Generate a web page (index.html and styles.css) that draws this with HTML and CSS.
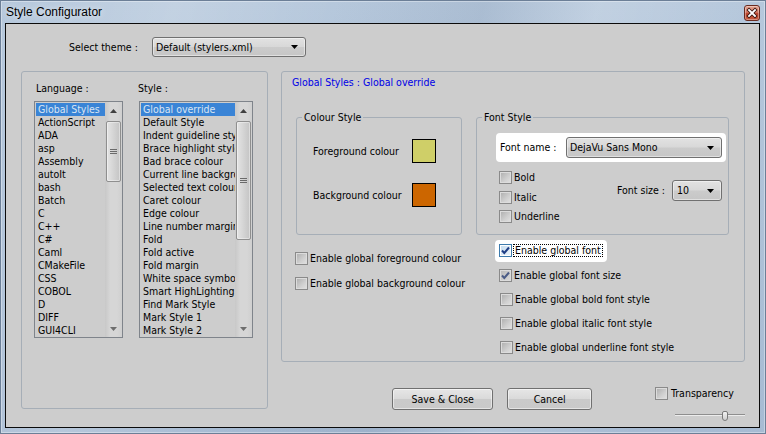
FILE: index.html
```html
<!DOCTYPE html>
<html>
<head>
<meta charset="utf-8">
<title>Style Configurator</title>
<link rel="stylesheet" href="styles.css">
</head>
<body>
<div class="window">
  <div class="titlebar">
    <span class="title">Style Configurator</span>
    <span class="close">
      <svg width="14" height="14" viewBox="0 0 14 14"><path d="M4 4L10 10M10 4L4 10" stroke="#3b1710" stroke-width="3.6" stroke-linecap="square"/><path d="M4 4L10 10M10 4L4 10" stroke="#ffffff" stroke-width="1.8" stroke-linecap="square"/></svg>
    </span>
  </div>
  <div class="client">
    <div class="theme-row">
      <span class="theme-label">Select theme :</span>
      <div class="combo theme-combo"><span class="combo-text">Default (stylers.xml)</span><svg class="arrow" width="7" height="4" viewBox="0 0 7 4"><path d="M0 0H7L3.5 4Z" fill="#000"/></svg></div>
    </div>
    <div class="main">
      <div class="group left-group">
        <div class="col lang-col">
          <div class="col-label lang-label">Language :</div>
          <div class="listbox">
            <ul class="items">
              <li class="sel">Global Styles</li>
              <li>ActionScript</li>
              <li>ADA</li>
              <li>asp</li>
              <li>Assembly</li>
              <li>autoIt</li>
              <li>bash</li>
              <li>Batch</li>
              <li>C</li>
              <li>C++</li>
              <li>C#</li>
              <li>Caml</li>
              <li>CMakeFile</li>
              <li>CSS</li>
              <li>COBOL</li>
              <li>D</li>
              <li>DIFF</li>
              <li>GUI4CLI</li>
            </ul>
            <div class="vscroll">
              <div class="sb-btn"><svg width="7" height="4" viewBox="0 0 7 4"><path d="M3.5 0L7 4H0Z" fill="#404040"/></svg></div>
              <div class="sb-thumb lang-thumb"><svg width="7" height="5" viewBox="0 0 7 5"><path d="M0 0.5H7M0 2.5H7M0 4.5H7" stroke="#6a6a6a" stroke-width="1"/></svg></div>
              <div class="sb-track"></div>
              <div class="sb-btn"><svg width="7" height="4" viewBox="0 0 7 4"><path d="M0 0H7L3.5 4Z" fill="#6e6e6e"/></svg></div>
            </div>
          </div>
        </div>
        <div class="col style-col">
          <div class="col-label style-label">Style :</div>
          <div class="listbox">
            <ul class="items">
              <li class="sel">Global override</li>
              <li>Default Style</li>
              <li>Indent guideline style</li>
              <li>Brace highlight style</li>
              <li>Bad brace colour</li>
              <li>Current line background colour</li>
              <li>Selected text colour</li>
              <li>Caret colour</li>
              <li>Edge colour</li>
              <li>Line number margin</li>
              <li>Fold</li>
              <li>Fold active</li>
              <li>Fold margin</li>
              <li>White space symbol</li>
              <li>Smart HighLighting</li>
              <li>Find Mark Style</li>
              <li>Mark Style 1</li>
              <li>Mark Style 2</li>
            </ul>
            <div class="vscroll">
              <div class="sb-btn"><svg width="7" height="4" viewBox="0 0 7 4"><path d="M3.5 0L7 4H0Z" fill="#404040"/></svg></div>
              <div class="sb-thumb style-thumb"><svg width="7" height="5" viewBox="0 0 7 5"><path d="M0 0.5H7M0 2.5H7M0 4.5H7" stroke="#6a6a6a" stroke-width="1"/></svg></div>
              <div class="sb-track"></div>
              <div class="sb-btn"><svg width="7" height="4" viewBox="0 0 7 4"><path d="M0 0H7L3.5 4Z" fill="#6e6e6e"/></svg></div>
            </div>
          </div>
        </div>
      </div>

      <div class="right-col">
        <div class="group right-group">
          <div class="global-title">Global Styles : Global override</div>
          <div class="panels">
            <div class="panel-col colour-col">
              <fieldset class="fs colour-fs">
                <legend>Colour Style</legend>
                <div class="fs-body colour-body">
                  <div class="swatch-row"><span class="swatch-label">Foreground colour</span><span class="swatch fg"></span></div>
                  <div class="swatch-row"><span class="swatch-label">Background colour</span><span class="swatch bg"></span></div>
                </div>
              </fieldset>
              <div class="left-enables">
                <div class="check"><span class="box"></span><span>Enable global foreground colour</span></div>
                <div class="check"><span class="box"></span><span>Enable global background colour</span></div>
              </div>
            </div>
            <div class="panel-col font-col">
              <fieldset class="fs font-fs">
                <legend>Font Style</legend>
                <div class="fs-body font-body">
                  <div class="hl font-name-row">
                    <span class="font-name-label">Font name :</span>
                    <div class="combo font-combo"><span class="combo-text">DejaVu Sans Mono</span><svg class="arrow" width="7" height="4" viewBox="0 0 7 4"><path d="M0 0H7L3.5 4Z" fill="#000"/></svg></div>
                  </div>
                  <div class="font-opts">
                    <div class="opt-checks">
                      <div class="check"><span class="box"></span><span>Bold</span></div>
                      <div class="check"><span class="box"></span><span>Italic</span></div>
                      <div class="check"><span class="box"></span><span>Underline</span></div>
                    </div>
                    <div class="font-size">
                      <span class="font-size-label">Font size :</span>
                      <div class="combo size-combo"><span class="combo-text">10</span><svg class="arrow" width="7" height="4" viewBox="0 0 7 4"><path d="M0 0H7L3.5 4Z" fill="#000"/></svg></div>
                    </div>
                  </div>
                </div>
              </fieldset>
              <div class="right-enables">
                <div class="hl enable-font">
                  <div class="check"><span class="box checked focus-box"><svg width="11" height="11" viewBox="0 0 11 11"><path d="M2 5.5L4.3 8L9 2.5" fill="none" stroke="#1f3e86" stroke-width="2"/></svg></span><span class="focus-text">Enable global font</span></div>
                </div>
                <div class="plain-checks">
                  <div class="check"><span class="box checked dim"><svg width="11" height="11" viewBox="0 0 11 11"><path d="M2 5.5L4.3 8L9 2.5" fill="none" stroke="#4a5b86" stroke-width="2"/></svg></span><span>Enable global font size</span></div>
                  <div class="check shift"><span class="box"></span><span>Enable global bold font style</span></div>
                  <div class="check shift"><span class="box"></span><span>Enable global italic font style</span></div>
                  <div class="check shift"><span class="box"></span><span>Enable global underline font style</span></div>
                </div>
              </div>
            </div>
          </div>
        </div>
        <div class="footer">
          <div class="btn btn-save">Save &amp; Close</div>
          <div class="btn btn-cancel">Cancel</div>
          <div class="transp">
            <div class="check"><span class="box"></span><span>Transparency</span></div>
            <div class="slider"><span class="slider-thumb"></span></div>
          </div>
        </div>
      </div>
    </div>
  </div>
</div>
</body>
</html>
```

FILE: styles.css
```css
* { box-sizing: border-box; }
html, body { margin: 0; padding: 0; }
body {
  width: 766px;
  height: 434px;
  overflow: hidden;
  font-family: "DejaVu Sans Condensed", "Liberation Sans", sans-serif;
  font-size: 10.5px;
  line-height: 13px;
  color: #000;
  background: #a8bcd4;
}

.window {
  width: 766px;
  height: 434px;
  display: flex;
  flex-direction: column;
  padding: 0 6px 6px 5px;
  background:
    linear-gradient(105deg, rgba(255,255,255,0) 0%, rgba(255,255,255,0.18) 20%, rgba(255,255,255,0) 38%, rgba(90,110,140,0.12) 55%, rgba(255,255,255,0.16) 68%, rgba(255,255,255,0) 85%),
    linear-gradient(#b6c8dc, #a7bbd3);
  box-shadow: inset 0 0 0 1px #6c7f97, inset 0 0 0 2px rgba(255,255,255,0.35);
}

.titlebar {
  height: 23px;
  flex: none;
  display: flex;
  justify-content: space-between;
  align-items: flex-start;
}
.title {
  font-family: "Liberation Sans", sans-serif;
  font-size: 12px;
  line-height: 16px;
  margin-top: 4px;
  margin-left: 1px;
  color: #000;
  text-shadow: 0 0 6px rgba(255,255,255,0.8);
}
.close {
  width: 16px;
  height: 16px;
  margin-top: 5px;
  border: 1px solid #6a2b1f;
  border-radius: 3px;
  background: linear-gradient(#e6a794 0%, #d27560 45%, #b8412a 55%, #c95a3e 100%);
  display: flex;
  align-items: center;
  justify-content: center;
  box-shadow: inset 0 0 0 1px rgba(255,255,255,0.35);
}

.client {
  flex: 1;
  border: 1px solid #0b0b0b;
  background: #cdcdcd;
  padding: 13px 0 0 15px;
}

.theme-row {
  display: flex;
  align-items: center;
  height: 20px;
  padding-left: 48px;
}
.theme-label { width: 83px; }

.combo {
  display: flex;
  align-items: center;
  justify-content: space-between;
  border: 1px solid #707070;
  border-radius: 3px;
  background: linear-gradient(#e2e2e2 0%, #d8d8d8 48%, #cbcbcb 52%, #c6c6c6 100%);
  box-shadow: inset 0 0 0 1px rgba(255,255,255,0.45);
  padding: 0 7px 0 3px;
  white-space: nowrap;
}
.theme-combo { width: 154px; height: 20px; }
.font-combo { width: 156px; height: 21px; }
.size-combo { width: 50px; height: 21px; padding-left: 4px; }
.arrow { flex: none; }

.main {
  display: flex;
  align-items: flex-start;
  margin-top: 14px;
}

.group {
  border: 1px solid #a6aeb7;
  border-radius: 3px;
}

.left-group {
  width: 247px;
  height: 338px;
  padding: 10px 0 0 12px;
  display: flex;
  gap: 16px;
}
.lang-col { width: 89px; }
.style-col { width: 114px; }
.col-label { height: 13px; margin-bottom: 6px; white-space: nowrap; }
.lang-label { margin-left: 2px; }
.style-label { margin-left: -1px; }

.listbox {
  height: 237px;
  border: 1px solid #7f848b;
  display: flex;
}
.items {
  list-style: none;
  margin: 0;
  padding: 1px 0 0 1px;
  flex: 1;
  min-width: 0;
  overflow: hidden;
}
.items li {
  height: 13px;
  padding-left: 2px;
  white-space: nowrap;
  overflow: hidden;
}
.items li.sel {
  background: #3a84d6;
  color: #d9e4f3;
}

.vscroll {
  width: 17px;
  flex: none;
  display: flex;
  flex-direction: column;
  background: linear-gradient(90deg, #c8c8c8, #d6d6d6 30%, #d6d6d6 70%, #cfcfcf);
}
.sb-btn {
  height: 17px;
  flex: none;
  display: flex;
  align-items: center;
  justify-content: center;
}
.sb-thumb {
  flex: none;
  margin: 2px 1px 0;
  border: 1px solid #8f8f8f;
  border-radius: 2px;
  background: linear-gradient(90deg, #e4e4e4, #d4d4d4 50%, #c4c4c4);
  box-shadow: inset 0 0 0 1px rgba(255,255,255,0.4);
  display: flex;
  align-items: center;
  justify-content: center;
}
.lang-thumb { height: 61px; }
.style-thumb { height: 119px; }
.sb-track { flex: 1; }

.right-col {
  margin-left: 13px;
  width: 464px;
  display: flex;
  flex-direction: column;
}
.right-group {
  height: 291px;
  padding-top: 4px;
}
.global-title {
  margin-left: 10px;
  height: 13px;
  color: #0000e6;
}
.panels {
  display: flex;
  gap: 14px;
  margin-top: 22px;
  padding-left: 14px;
}
.colour-col { width: 166px; }
.font-col { width: 253px; }

.fs {
  margin: 0;
  padding: 0;
  border: 1px solid #a6aeb7;
  border-radius: 3px;
  min-width: 0;
}
.fs legend {
  padding: 0 2px;
  margin-left: 5px;
  line-height: 13px;
}
.fs-body { height: 110px; }

.colour-body {
  padding: 15px 0 0 16px;
  display: flex;
  flex-direction: column;
  gap: 20px;
}
.swatch-row {
  display: flex;
  align-items: center;
  height: 24px;
}
.swatch-label { width: 99px; white-space: nowrap; }
.swatch {
  width: 24px;
  height: 24px;
  border: 1px solid #000;
}
.swatch.fg { background: #cfcf68; }
.swatch.bg { background: #cc6600; }

.font-body { padding: 9px 0 0 19px; }
.hl {
  background: #fff;
  border-radius: 4px;
}
.font-name-row {
  width: 230px;
  height: 29px;
  padding: 4px;
  display: flex;
  align-items: center;
}
.font-name-label { width: 66px; white-space: nowrap; }

.font-opts {
  width: 230px;
  margin-top: 9px;
  padding: 0 4px 0 3px;
  display: flex;
  justify-content: space-between;
  align-items: flex-start;
}
.opt-checks {
  display: flex;
  flex-direction: column;
  gap: 6.5px;
}
.font-size {
  display: flex;
  align-items: center;
  margin-top: 9px;
}
.font-size-label { width: 55px; white-space: nowrap; }

.check {
  display: flex;
  align-items: center;
  gap: 2px;
  height: 13px;
  white-space: nowrap;
}
.box {
  width: 13px;
  height: 13px;
  flex: none;
  border: 1px solid #8a8a8a;
  background: linear-gradient(135deg, #acacac, #d0d0d0 60%, #e2e2e2);
  box-shadow: inset 0 0 0 1px #dcdcdc;
  display: flex;
  align-items: center;
  justify-content: center;
}
.box.checked.focus-box {
  border-color: #3d7bad;
  background: linear-gradient(135deg, #c4dcf0, #eef5fb);
  box-shadow: inset 0 0 0 1px #ffffff;
}
.box.checked.dim {
  background: linear-gradient(135deg, #b8b8b8, #dadada);
}

.left-enables {
  margin-top: 17px;
  margin-left: -1px;
  display: flex;
  flex-direction: column;
  gap: 12px;
}
.right-enables {
  margin-top: 5px;
  padding-left: 19px;
  display: flex;
  flex-direction: column;
  align-items: flex-start;
}
.enable-font {
  padding: 4px 4px 5px 4px;
}
.focus-text {
  border: 1px dotted #000;
  padding: 0 1px;
  margin-left: -1px;
  line-height: 11px;
}
.plain-checks {
  margin-top: 7px;
  padding-left: 4px;
  display: flex;
  flex-direction: column;
  gap: 11px;
}
.check.shift { margin-left: 1px; }

.footer {
  margin-top: 25px;
  padding-left: 111px;
  display: flex;
  align-items: flex-start;
}
.btn {
  height: 22px;
  margin-top: 1px;
  border: 1px solid #707070;
  border-radius: 3px;
  background: linear-gradient(#e6e6e6 0%, #dadada 48%, #cacaca 52%, #c9c9c9 100%);
  box-shadow: inset 0 0 0 1px rgba(255,255,255,0.5);
  display: flex;
  align-items: center;
  justify-content: center;
  white-space: nowrap;
}
.btn-save { width: 102px; }
.btn-cancel { width: 85px; margin-left: 14px; }

.transp {
  margin-left: 63px;
  display: flex;
  flex-direction: column;
}
.transp .check { gap: 3px; }
.slider {
  width: 70px;
  height: 10px;
  margin-top: 11px;
  margin-left: 20px;
  display: flex;
  background: linear-gradient(to bottom, transparent 3px, #8e8e8e 3px, #8e8e8e 4px, #ececec 4px, #ececec 5px, transparent 5px);
}
.slider-thumb {
  width: 6px;
  height: 10px;
  margin-left: 47px;
  border: 1px solid #7a7a7a;
  border-radius: 2px 2px 3px 3px;
  background: linear-gradient(#f2f2f2, #cfcfcf);
}
```
